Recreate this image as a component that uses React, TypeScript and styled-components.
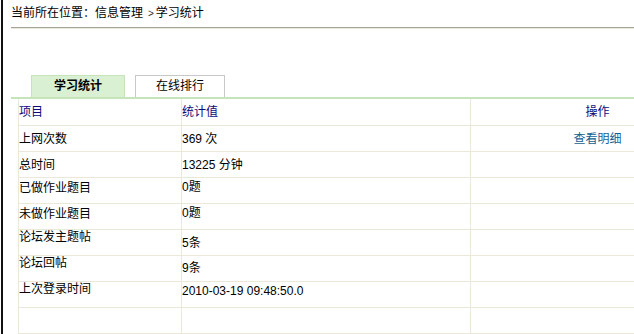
import React from 'react';
import styled, { createGlobalStyle } from 'styled-components';

const GlobalStyle = createGlobalStyle`
  html, body {
    margin: 0;
    padding: 0;
    overflow: hidden;
    background: #ffffff;
  }
  body {
    font-family: "Liberation Sans", "Noto Sans CJK SC", sans-serif;
    font-size: 12px;
    color: #000000;
  }
`;

const Frame = styled.div`
  margin-left: 1px;
  height: 334px;
  overflow: hidden;
  border-left: 2px solid #111111;
`;

const Main = styled.div`
  margin-left: 8px;
`;

const Breadcrumb = styled.div`
  box-sizing: border-box;
  height: 28px;
  padding-top: 4px;
  line-height: 18px;
  border-bottom: 1px solid #a6a49a;
  box-shadow: 0 1px 0 #ebeadb;
`;

const Sep = styled.span`
  font-size: 10px;
  margin: 0 2px 0 5px;
  color: #333333;
`;

const TabBar = styled.div`
  display: flex;
  gap: 10px;
  margin-top: 47px;
  padding-left: 20px;
  border-bottom: 2px solid #c6e4ba;
`;

const Tab = styled.div<{ $active?: boolean; $width: number }>`
  box-sizing: border-box;
  width: ${p => p.$width}px;
  height: 22px;
  line-height: 20px;
  text-align: center;
  font-weight: ${p => (p.$active ? 'bold' : 'normal')};
  background: ${p => (p.$active ? '#d9f0d2' : '#ffffff')};
  border: 1px solid ${p => (p.$active ? '#c5e4ba' : '#c8c8c8')};
  border-bottom: none;
`;

const TableWrap = styled.div`
  margin-left: 7px;
  overflow: hidden;
`;

const Table = styled.table`
  width: 706px;
  border-collapse: collapse;
  table-layout: fixed;
`;

const HeadCell = styled.th<{ $center?: boolean }>`
  height: 26px;
  padding: 0;
  font-weight: normal;
  color: #0b0b7a;
  text-align: ${p => (p.$center ? 'center' : 'left')};
  vertical-align: middle;
  border: 1px solid #ece8d8;
  border-top: none;
  line-height: 14px;
`;

const Cell = styled.td<{ $top?: number; $center?: boolean }>`
  box-sizing: border-box;
  height: 26px;
  padding: ${p => (p.$top === undefined ? 0 : `${p.$top}px 0 0 0`)};
  line-height: 14px;
  text-align: ${p => (p.$center ? 'center' : 'left')};
  vertical-align: ${p => (p.$top === undefined ? 'middle' : 'top')};
  border: 1px solid #ece8d8;
`;

const Link = styled.a`
  color: #135f94;
  text-decoration: none;
  cursor: pointer;
`;

interface Row {
  label: string;
  value: string;
  labelTop?: number;
  valueTop?: number;
  action?: string;
}

const rows: Row[] = [
  { label: '上网次数', value: '369 次', action: '查看明细' },
  { label: '总时间', value: '13225 分钟' },
  { label: '已做作业题目', value: '0题', labelTop: 3, valueTop: 2 },
  { label: '未做作业题目', value: '0题', labelTop: 3, valueTop: 2 },
  { label: '论坛发主题帖', value: '5条', labelTop: 0, valueTop: 6 },
  { label: '论坛回帖', value: '9条', labelTop: 0, valueTop: 5 },
  { label: '上次登录时间', value: '2010-03-19 09:48:50.0', labelTop: 0, valueTop: 2 },
];

export default function App() {
  return (
    <>
      <GlobalStyle />
      <Frame>
        <Main>
          <Breadcrumb>
            当前所在位置：信息管理<Sep>&gt;</Sep>学习统计
          </Breadcrumb>
          <TabBar>
            <Tab $active $width={94}>学习统计</Tab>
            <Tab $width={90}>在线排行</Tab>
          </TabBar>
          <TableWrap>
            <Table>
              <colgroup>
                <col style={{ width: 163 }} />
                <col style={{ width: 289 }} />
                <col style={{ width: 254 }} />
              </colgroup>
              <thead>
                <tr>
                  <HeadCell>项目</HeadCell>
                  <HeadCell>统计值</HeadCell>
                  <HeadCell $center>操作</HeadCell>
                </tr>
              </thead>
              <tbody>
                {rows.map(r => (
                  <tr key={r.label}>
                    <Cell $top={r.labelTop}>{r.label}</Cell>
                    <Cell $top={r.valueTop}>{r.value}</Cell>
                    <Cell $center>
                      {r.action && <Link>{r.action}</Link>}
                    </Cell>
                  </tr>
                ))}
                <tr>
                  <Cell />
                  <Cell />
                  <Cell />
                </tr>
              </tbody>
            </Table>
          </TableWrap>
        </Main>
      </Frame>
    </>
  );
}
